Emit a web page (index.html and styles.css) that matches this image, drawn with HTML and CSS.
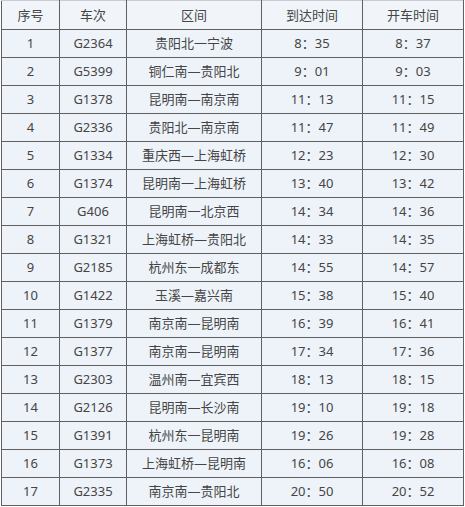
FILE: index.html
```html
<!DOCTYPE html>
<html lang="zh">
<head>
<meta charset="utf-8">
<link rel="stylesheet" href="styles.css">
</head>
<body>
<div class="wrap">
<table class="tt">
<colgroup>
<col class="c1"><col class="c2"><col class="c3"><col class="c4"><col class="c5">
</colgroup>
<thead>
<tr><th>序号</th><th>车次</th><th>区间</th><th>到达时间</th><th>开车时间</th></tr>
</thead>
<tbody>
<tr><td>1</td><td>G2364</td><td>贵阳北一宁波</td><td>8：35</td><td>8：37</td></tr>
<tr><td>2</td><td>G5399</td><td>铜仁南—贵阳北</td><td>9：01</td><td>9：03</td></tr>
<tr><td>3</td><td>G1378</td><td>昆明南—南京南</td><td>11：13</td><td>11：15</td></tr>
<tr><td>4</td><td>G2336</td><td>贵阳北—南京南</td><td>11：47</td><td>11：49</td></tr>
<tr><td>5</td><td>G1334</td><td>重庆西—上海虹桥</td><td>12：23</td><td>12：30</td></tr>
<tr><td>6</td><td>G1374</td><td>昆明南一上海虹桥</td><td>13：40</td><td>13：42</td></tr>
<tr><td>7</td><td>G406</td><td>昆明南一北京西</td><td>14：34</td><td>14：36</td></tr>
<tr><td>8</td><td>G1321</td><td>上海虹桥—贵阳北</td><td>14：33</td><td>14：35</td></tr>
<tr><td>9</td><td>G2185</td><td>杭州东一成都东</td><td>14：55</td><td>14：57</td></tr>
<tr><td>10</td><td>G1422</td><td>玉溪—嘉兴南</td><td>15：38</td><td>15：40</td></tr>
<tr><td>11</td><td>G1379</td><td>南京南—昆明南</td><td>16：39</td><td>16：41</td></tr>
<tr><td>12</td><td>G1377</td><td>南京南—昆明南</td><td>17：34</td><td>17：36</td></tr>
<tr><td>13</td><td>G2303</td><td>温州南—宜宾西</td><td>18：13</td><td>18：15</td></tr>
<tr><td>14</td><td>G2126</td><td>昆明南—长沙南</td><td>19：10</td><td>19：18</td></tr>
<tr><td>15</td><td>G1391</td><td>杭州东一昆明南</td><td>19：26</td><td>19：28</td></tr>
<tr><td>16</td><td>G1373</td><td>上海虹桥—昆明南</td><td>16：06</td><td>16：08</td></tr>
<tr><td>17</td><td>G2335</td><td>南京南—贵阳北</td><td>20：50</td><td>20：52</td></tr>
</tbody>
</table>
</div>
</body>
</html>
```
FILE: styles.css
```css
html, body {
  margin: 0;
  padding: 0;
  background: #ffffff;
}
.wrap {
  padding: 0 0 0 1px;
}
.tt {
  border-collapse: collapse;
  table-layout: fixed;
  width: 463px;
  font-family: "Noto Sans", "Noto Sans CJK SC", sans-serif;
  font-size: 13px;
  color: #454545;
  background: #eef3f9;
}
.c1 { width: 58px; }
.c2 { width: 67px; }
.c3 { width: 135px; }
.c4 { width: 101px; }
.c5 { width: 101px; }
.tt th, .tt td {
  border: 1px solid #606060;
  text-align: center;
  padding: 0;
  font-weight: normal;
  height: 27px;
  line-height: 27px;
  white-space: nowrap;
  overflow: hidden;
}
.tt thead th {
  border-top-color: #c8ccd2;
  height: 28px;
  line-height: 28px;
  background: #f1f5fa;
}
```
